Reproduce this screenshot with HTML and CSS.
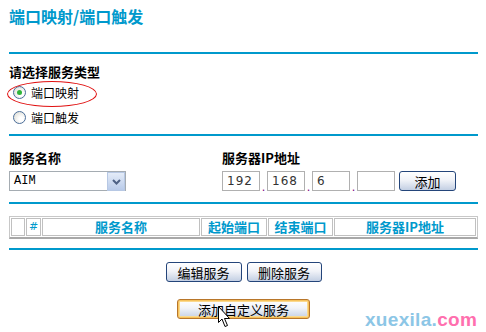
FILE: index.html
```html
<!DOCTYPE html>
<html lang="zh-CN">
<head>
  <meta charset="UTF-8">
  <title>端口映射/端口触发</title>
  <link rel="stylesheet" href="styles.css">
</head>
<body>
  <div class="page">
    <h1 class="title">端口映射/端口触发</h1>
    <div class="rule rule-top"></div>

    <div class="type-block">
      <div class="label">请选择服务类型</div>
      <div class="radio-row">
        <span class="radio checked"></span><span>端口映射</span>
        <span class="mark"></span>
      </div>
      <div class="radio-row">
        <span class="radio"></span><span>端口触发</span>
      </div>
    </div>
    <div class="rule rule-type"></div>

    <div class="service-grid">
      <div class="label">服务名称</div>
      <div class="label">服务器IP地址</div>
      <div class="select">
        <span class="select-value">AIM</span>
        <span class="select-btn">
          <svg width="9" height="6" viewBox="0 0 9 6"><path d="M1 1 L4.5 4.5 L8 1" fill="none" stroke="#4d6185" stroke-width="2"/></svg>
        </span>
      </div>
      <div class="ip-row">
        <span class="ip-box">192</span><span class="dot">.</span>
        <span class="ip-box">168</span><span class="dot">.</span>
        <span class="ip-box">6</span><span class="dot">.</span>
        <span class="ip-box"></span>
        <button class="btn btn-add">添加</button>
      </div>
    </div>
    <div class="rule rule-grid"></div>

    <table class="svc-table">
      <tr>
        <th class="c0"></th>
        <th class="c1">#</th>
        <th class="c2">服务名称</th>
        <th class="c3">起始端口</th>
        <th class="c4">结束端口</th>
        <th class="c5">服务器IP地址</th>
      </tr>
    </table>
    <div class="rule rule-table"></div>

    <div class="btn-row">
      <button class="btn btn-edit">编辑服务</button>
      <button class="btn btn-del">删除服务</button>
    </div>
    <div class="btn-row btn-row-last">
      <button class="btn btn-custom">添加自定义服务</button>
      <svg class="cursor" width="13" height="22" viewBox="0 0 13 22">
        <path d="M0.5 0.5 L0.5 16.5 L4 13 L7 20.5 L9.5 19.5 L6.5 12.5 L11.5 12.5 Z" fill="#fff" stroke="#000" stroke-width="1"/>
      </svg>
    </div>

    <div class="watermark"><span class="wm-a">xuexila.</span><span class="wm-b">com</span></div>
  </div>
</body>
</html>
```

FILE: styles.css
```css
body {
  margin: 0;
  background: #ffffff;
  font-family: "Noto Sans CJK SC", sans-serif;
  font-size: 12px;
  color: #000;
}

.page {
  position: relative;
  width: 469px;
  height: 332px;
  padding: 7px 0 0 9px;
  box-sizing: content-box;
}

.title {
  margin: 0;
  font-size: 16px;
  line-height: 18px;
  font-weight: bold;
  color: #0099cc;
}

.rule {
  height: 2px;
  background: #0099cc;
}

.rule-top { margin-top: 27px; }
.rule-type { margin-top: 4px; }
.rule-grid { margin-top: 11px; }
.rule-table { margin-top: 9px; }

.label {
  font-size: 13px;
  font-weight: bold;
  line-height: 16px;
}

.type-block {
  margin-top: 10px;
}

.radio-row {
  position: relative;
  display: flex;
  align-items: center;
  height: 25px;
  padding-left: 4px;
}

.radio {
  width: 11px;
  height: 11px;
  margin-right: 5px;
  border: 1px solid #4b6e9a;
  border-radius: 50%;
  background: radial-gradient(circle at 65% 65%, #ffffff 20%, #dcdcd4 90%);
  display: flex;
  align-items: center;
  justify-content: center;
}

.radio.checked::after {
  content: "";
  width: 5px;
  height: 5px;
  border-radius: 50%;
  background: #2fb53a;
}

.mark {
  position: absolute;
  left: -2px;
  top: 1px;
  width: 88px;
  height: 24px;
  border: 1px solid #e01010;
  border-radius: 50%;
}

.service-grid {
  display: grid;
  grid-template-columns: 213px 1fr;
  row-gap: 5px;
  margin-top: 14px;
}

.select {
  display: flex;
  width: 117px;
  height: 20px;
  border: 1px solid #a5acb2;
  box-sizing: border-box;
}

.select-value {
  flex: 1;
  padding-left: 4px;
  font-family: "Liberation Mono", monospace;
  font-size: 12px;
  line-height: 18px;
}

.select-btn {
  width: 16px;
  height: 17px;
  margin: 0 0 0 0;
  border: 1px solid #b7c8e4;
  background: linear-gradient(#e4ecf8, #b9cbea);
  display: flex;
  align-items: center;
  justify-content: center;
}

.ip-row {
  display: flex;
  align-items: flex-end;
}

.ip-box {
  width: 38px;
  height: 20px;
  border: 1px solid #b0b0b0;
  box-sizing: border-box;
  padding-left: 4px;
  font-family: "DejaVu Sans", sans-serif;
  font-size: 12px;
  letter-spacing: 1px;
  line-height: 18px;
  color: #333;
}

.dot {
  width: 7px;
  text-align: center;
  color: #800080;
  font-size: 11px;
  line-height: 10px;
}

.btn {
  height: 20px;
  padding: 0;
  border: 1px solid #24457a;
  border-radius: 3px;
  background: linear-gradient(#ffffff, #f1f3f8 45%, #c3cfe3);
  font-family: "Noto Sans CJK SC", sans-serif;
  font-size: 13px;
  line-height: 17px;
  color: #000;
}

.btn-add {
  width: 57px;
  margin-left: 4px;
}

.svc-table {
  margin-top: 12px;
  width: 469px;
  height: 23px;
  border-collapse: separate;
  border-spacing: 1px;
  border: 1px solid #c8c8c8;
  border-bottom: 2px solid #a8a8a8;
  table-layout: fixed;
}

.svc-table th {
  border: 1px solid #c0c0c0;
  padding: 0;
  font-size: 13px;
  font-weight: bold;
  color: #0099cc;
  line-height: 16px;
  text-align: center;
}

.svc-table .c0 { width: 12px; }
.svc-table .c1 { width: 13px; font-family: "DejaVu Sans", sans-serif; font-weight: normal; font-size: 11px; }
.svc-table .c2 { width: 156px; }
.svc-table .c3 { width: 64px; }
.svc-table .c4 { width: 63px; }

.btn-row {
  display: flex;
  justify-content: center;
  gap: 5px;
  margin-top: 12px;
}

.btn-edit { width: 76px; }
.btn-del { width: 75px; }

.btn-row-last {
  position: relative;
  margin-top: 17px;
}

.btn-custom {
  width: 133px;
  border-color: #b8762a;
  box-shadow: inset 0 0 0 1px #f6c25c, inset 0 0 0 2px #fbd98e;
}

.cursor {
  position: absolute;
  left: 209px;
  top: 7px;
}

.watermark {
  position: absolute;
  left: 365px;
  top: 309px;
  font-family: "Liberation Sans", Arial, sans-serif;
  font-size: 19px;
  font-weight: bold;
  letter-spacing: 0.3px;
}

.wm-a { color: #8cc6e6; }
.wm-b { color: #ff6fae; }
```
